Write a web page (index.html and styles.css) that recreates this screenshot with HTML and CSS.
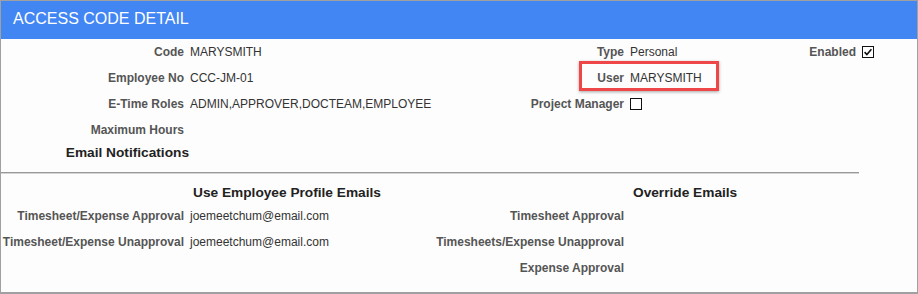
FILE: index.html
```html
<!DOCTYPE html>
<html>
<head>
<meta charset="utf-8">
<link rel="stylesheet" href="styles.css">
</head>
<body>
<div class="frame">
  <div class="header">ACCESS CODE DETAIL</div>
  <div class="top-grid">
    <div class="lbl">Code</div>
    <div class="val">MARYSMITH</div>
    <div class="lbl">Type</div>
    <div class="val">Personal</div>
    <div class="lbl">Enabled</div>
    <div class="val box"><svg class="cb" width="12" height="12" viewBox="0 0 12 12"><rect x="0.5" y="0.5" width="11" height="11" fill="#fff" stroke="#111"/><path d="M2.6 6.1 L4.9 8.6 L9.4 3.2" fill="none" stroke="#111" stroke-width="1.6"/></svg></div>

    <div class="lbl">Employee No</div>
    <div class="val">CCC-JM-01</div>
    <div class="lbl">User</div>
    <div class="val">MARYSMITH</div>
    <div class="lbl"></div>
    <div class="val"></div>

    <div class="lbl">E-Time Roles</div>
    <div class="val">ADMIN,APPROVER,DOCTEAM,EMPLOYEE</div>
    <div class="lbl">Project Manager</div>
    <div class="val box"><svg class="cb" width="12" height="12" viewBox="0 0 12 12"><rect x="0.5" y="0.5" width="11" height="11" fill="#fff" stroke="#111"/></svg></div>
    <div class="lbl"></div>
    <div class="val"></div>

    <div class="lbl">Maximum Hours</div>
    <div class="val"></div>
  </div>
  <div class="section-title">Email Notifications</div>
  <div class="sep"></div>
  <div class="bottom-grid">
    <div></div>
    <div class="head">Use Employee Profile Emails</div>
    <div></div>
    <div class="head">Override Emails</div>

    <div class="lbl">Timesheet/Expense Approval</div>
    <div class="val">joemeetchum@email.com</div>
    <div class="lbl">Timesheet Approval</div>
    <div class="val"></div>

    <div class="lbl">Timesheet/Expense Unapproval</div>
    <div class="val">joemeetchum@email.com</div>
    <div class="lbl">Timesheets/Expense Unapproval</div>
    <div class="val"></div>

    <div class="lbl"></div>
    <div class="val"></div>
    <div class="lbl">Expense Approval</div>
    <div class="val"></div>
  </div>
  <div class="highlight"></div>
</div>
</body>
</html>
```
FILE: styles.css
```css
html, body {
  margin: 0;
  padding: 0;
  background: #fff;
}
body {
  font-family: "Liberation Sans", Arial, sans-serif;
  font-size: 12px;
  color: #333;
}
.frame {
  position: relative;
  box-sizing: border-box;
  width: 918px;
  height: 294px;
  border: 1px solid #a0a0a0;
  border-bottom-width: 2px;
  background: #fdfdfd;
  overflow: hidden;
}
.header {
  height: 38px;
  line-height: 35px;
  background: #4286f4;
  color: #fff;
  font-size: 16px;
  padding-left: 12px;
  white-space: nowrap;
}
.top-grid {
  display: grid;
  grid-template-columns: 183px 244px 184px 110px 110px auto;
  column-gap: 6px;
  grid-auto-rows: 26px;
  line-height: 26px;
}
.bottom-grid {
  display: grid;
  grid-template-columns: 183px 236px 192px auto;
  column-gap: 6px;
  grid-template-rows: 21px 26px 26px 26px;
  line-height: 26px;
  padding-top: 8px;
}
.lbl {
  text-align: right;
  font-weight: bold;
  color: #555;
  white-space: nowrap;
}
.val {
  white-space: nowrap;
  color: #333;
}
.box {
  display: flex;
  align-items: center;
}
.cb {
  display: block;
}
.section-title {
  width: 188px;
  text-align: right;
  font-weight: bold;
  font-size: 13.7px;
  line-height: 20px;
  color: #222;
  white-space: nowrap;
}
.sep {
  margin-top: 9px;
  width: 858px;
  height: 0;
  border-top: 1px solid #999;
  border-bottom: 1px solid #d4d4d4;
}
.head {
  font-weight: bold;
  font-size: 13.7px;
  line-height: 21px;
  color: #222;
  padding-left: 3px;
  white-space: nowrap;
}
.highlight {
  position: absolute;
  left: 578px;
  top: 60px;
  width: 134px;
  height: 24px;
  border: 3px solid #ef4747;
  box-shadow: 0 1px 3px rgba(0, 0, 0, 0.35);
}
```
